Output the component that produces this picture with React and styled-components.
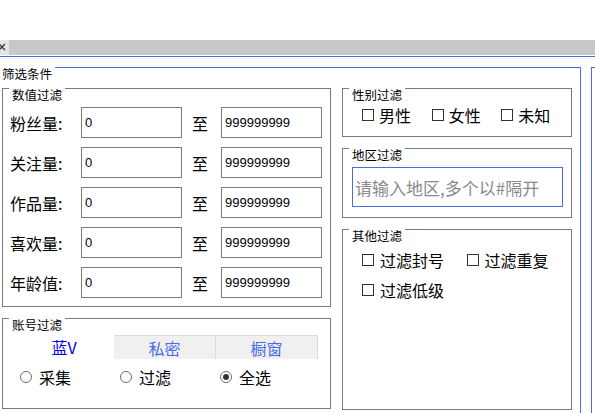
import styled, { createGlobalStyle } from 'styled-components';

const BLUE = '#476de6';
const GRAY = '#7a7a7a';

const GlobalStyle = createGlobalStyle`
  html, body {
    margin: 0;
    padding: 0;
    background: #fff;
    overflow: hidden;
  }
  body {
    font-family: "Noto Sans CJK SC", "Noto Sans", sans-serif;
    color: #000;
  }
`;

const Page = styled.div`
  width: 595px;
  height: 413px;
  overflow: hidden;
`;

const TopSpace = styled.div`
  height: 40px;
`;

const TabBar = styled.div`
  height: 15px;
  background: #c8c8c8;
  display: flex;
  margin-bottom: 1px;
`;

const CloseStub = styled.div`
  width: 9px;
  height: 15px;
  background: #e4e4e4;
  display: flex;
  align-items: center;
`;

const BlueRule = styled.div`
  height: 1px;
  background: ${BLUE};
  margin-bottom: 10px;
`;

const Workspace = styled.div`
  display: flex;
  gap: 10px;
`;

const MainPanel = styled.div`
  position: relative;
  box-sizing: border-box;
  width: 581px;
  height: 360px;
  border-top: 1px solid ${BLUE};
  border-right: 1px solid ${BLUE};
  padding: 20px 8px 0 2px;
`;

const SidePanel = styled.div`
  flex: 1;
  height: 360px;
  border-top: 1px solid ${BLUE};
  border-left: 1px solid ${BLUE};
`;

const PanelTitle = styled.span`
  position: absolute;
  top: -1px;
  left: 0;
  padding: 0 3px 0 2px;
  background: #fff;
  font-size: 12.5px;
  line-height: 14px;
`;

const Columns = styled.div`
  display: grid;
  grid-template-columns: 329px 230px;
  column-gap: 11px;
`;

const Column = styled.div`
  display: flex;
  flex-direction: column;
  gap: 11px;
`;

const Group = styled.div`
  position: relative;
  box-sizing: border-box;
  height: ${(p) => p.$h}px;
  border: 1px solid ${GRAY};
  padding: ${(p) => p.$pad || '0'};
`;

const Legend = styled.span`
  position: absolute;
  top: -1px;
  left: 6px;
  padding: 0 3px;
  background: #fff;
  font-size: 12.5px;
  line-height: 14px;
`;

const Rows = styled.div`
  display: flex;
  flex-direction: column;
  gap: 9px;
`;

const Row = styled.div`
  display: flex;
  align-items: center;
  height: 31px;
`;

const RowLabel = styled.span`
  width: 71px;
  font-size: 16px;
`;

const NumInput = styled.input`
  box-sizing: border-box;
  width: 101px;
  height: 31px;
  margin: 0;
  border: 1px solid ${GRAY};
  padding: 0 3px;
  font-family: "Liberation Sans", Arial, sans-serif;
  font-size: 13px;
  color: #000;
  background: #fff;
  outline: none;
`;

const To = styled.span`
  box-sizing: border-box;
  width: 39px;
  padding-left: 10px;
  font-size: 16px;
`;

const TabStrip = styled.div`
  display: flex;
  height: 24px;
`;

const Tab = styled.div`
  box-sizing: border-box;
  width: ${(p) => (p.$active ? 100 : 102)}px;
  display: flex;
  align-items: center;
  justify-content: center;
  font-size: 16px;
  color: ${(p) => (p.$active ? '#0000ee' : BLUE)};
  background: ${(p) => (p.$active ? '#fff' : '#f0f0f0')};
  border-top: ${(p) => (p.$active ? 'none' : '1px solid #dadada')};
  border-right: ${(p) => (p.$active ? 'none' : '1px solid #dadada')};
`;

const RadioRow = styled.div`
  display: flex;
  margin: 8px 0 0 6px;
  height: 20px;
`;

const RadioItem = styled.label`
  width: 100px;
  display: flex;
  align-items: center;
  gap: 7px;
  font-size: 16px;
`;

const RadioDot = styled.span`
  box-sizing: border-box;
  width: 12px;
  height: 12px;
  border: 1px solid #6e6e6e;
  border-radius: 50%;
  display: flex;
  align-items: center;
  justify-content: center;
  &::after {
    content: '';
    width: 6px;
    height: 6px;
    border-radius: 50%;
    background: ${(p) => (p.$checked ? '#333' : 'transparent')};
  }
`;

const CheckRows = styled.div`
  display: flex;
  flex-direction: column;
  gap: 10px;
`;

const CheckRow = styled.div`
  display: flex;
  height: 20px;
`;

const CheckItem = styled.label`
  width: ${(p) => p.$w}px;
  display: flex;
  align-items: center;
  gap: ${(p) => p.$gap}px;
  font-size: 16px;
  white-space: nowrap;
`;

const CheckBox = styled.span`
  box-sizing: border-box;
  width: 12px;
  height: 12px;
  border: 1px solid #333;
  background: #fff;
`;

const RegionInput = styled.input`
  box-sizing: border-box;
  width: 211px;
  height: 40px;
  margin: 0;
  border: 1px solid ${BLUE};
  padding: 0 2px;
  font-family: "Noto Sans CJK SC", sans-serif;
  font-size: 17px;
  outline: none;
  &::placeholder {
    color: #8a8a8a;
  }
`;

const ranges = ['粉丝量', '关注量', '作品量', '喜欢量', '年龄值'];

const Check = ({ label, w, gap }) => (
  <CheckItem $w={w} $gap={gap}>
    <CheckBox />
    {label}
  </CheckItem>
);

export default function App() {
  return (
    <Page>
      <GlobalStyle />
      <TopSpace />
      <TabBar>
        <CloseStub>
          <svg width="9" height="15" viewBox="0 0 9 15">
            <path d="M-1 4 L5 10 M5 4 L-1 10" stroke="#3c3c3c" strokeWidth="1.4" fill="none" />
          </svg>
        </CloseStub>
      </TabBar>
      <BlueRule />
      <Workspace>
        <MainPanel>
          <PanelTitle>筛选条件</PanelTitle>
          <Columns>
            <Column>
              <Group $h={219} $pad="18px 0 0 7px">
                <Legend>数值过滤</Legend>
                <Rows>
                  {ranges.map((name) => (
                    <Row key={name}>
                      <RowLabel>{name}:</RowLabel>
                      <NumInput readOnly value="0" />
                      <To>至</To>
                      <NumInput readOnly value="999999999" />
                    </Row>
                  ))}
                </Rows>
              </Group>
              <Group $h={91} $pad="16px 0 0 11px">
                <Legend>账号过滤</Legend>
                <TabStrip>
                  <Tab $active>蓝V</Tab>
                  <Tab>私密</Tab>
                  <Tab>橱窗</Tab>
                </TabStrip>
                <RadioRow>
                  <RadioItem>
                    <RadioDot />
                    采集
                  </RadioItem>
                  <RadioItem>
                    <RadioDot />
                    过滤
                  </RadioItem>
                  <RadioItem>
                    <RadioDot $checked />
                    全选
                  </RadioItem>
                </RadioRow>
              </Group>
            </Column>
            <Column>
              <Group $h={49} $pad="16px 0 0 19px">
                <Legend>性别过滤</Legend>
                <CheckRow>
                  <Check label="男性" w={70} gap={5} />
                  <Check label="女性" w={70} gap={5} />
                  <Check label="未知" w={70} gap={5} />
                </CheckRow>
              </Group>
              <Group $h={70} $pad="18px 0 0 9px">
                <Legend>地区过滤</Legend>
                <RegionInput placeholder="请输入地区,多个以#隔开" />
              </Group>
              <Group $h={181} $pad="20px 0 0 19px">
                <Legend>其他过滤</Legend>
                <CheckRows>
                  <CheckRow>
                    <Check label="过滤封号" w={110} gap={6} />
                    <Check label="过滤重复" w={110} gap={6} />
                  </CheckRow>
                  <CheckRow>
                    <Check label="过滤低级" w={110} gap={6} />
                  </CheckRow>
                </CheckRows>
              </Group>
            </Column>
          </Columns>
        </MainPanel>
        <SidePanel />
      </Workspace>
    </Page>
  );
}
